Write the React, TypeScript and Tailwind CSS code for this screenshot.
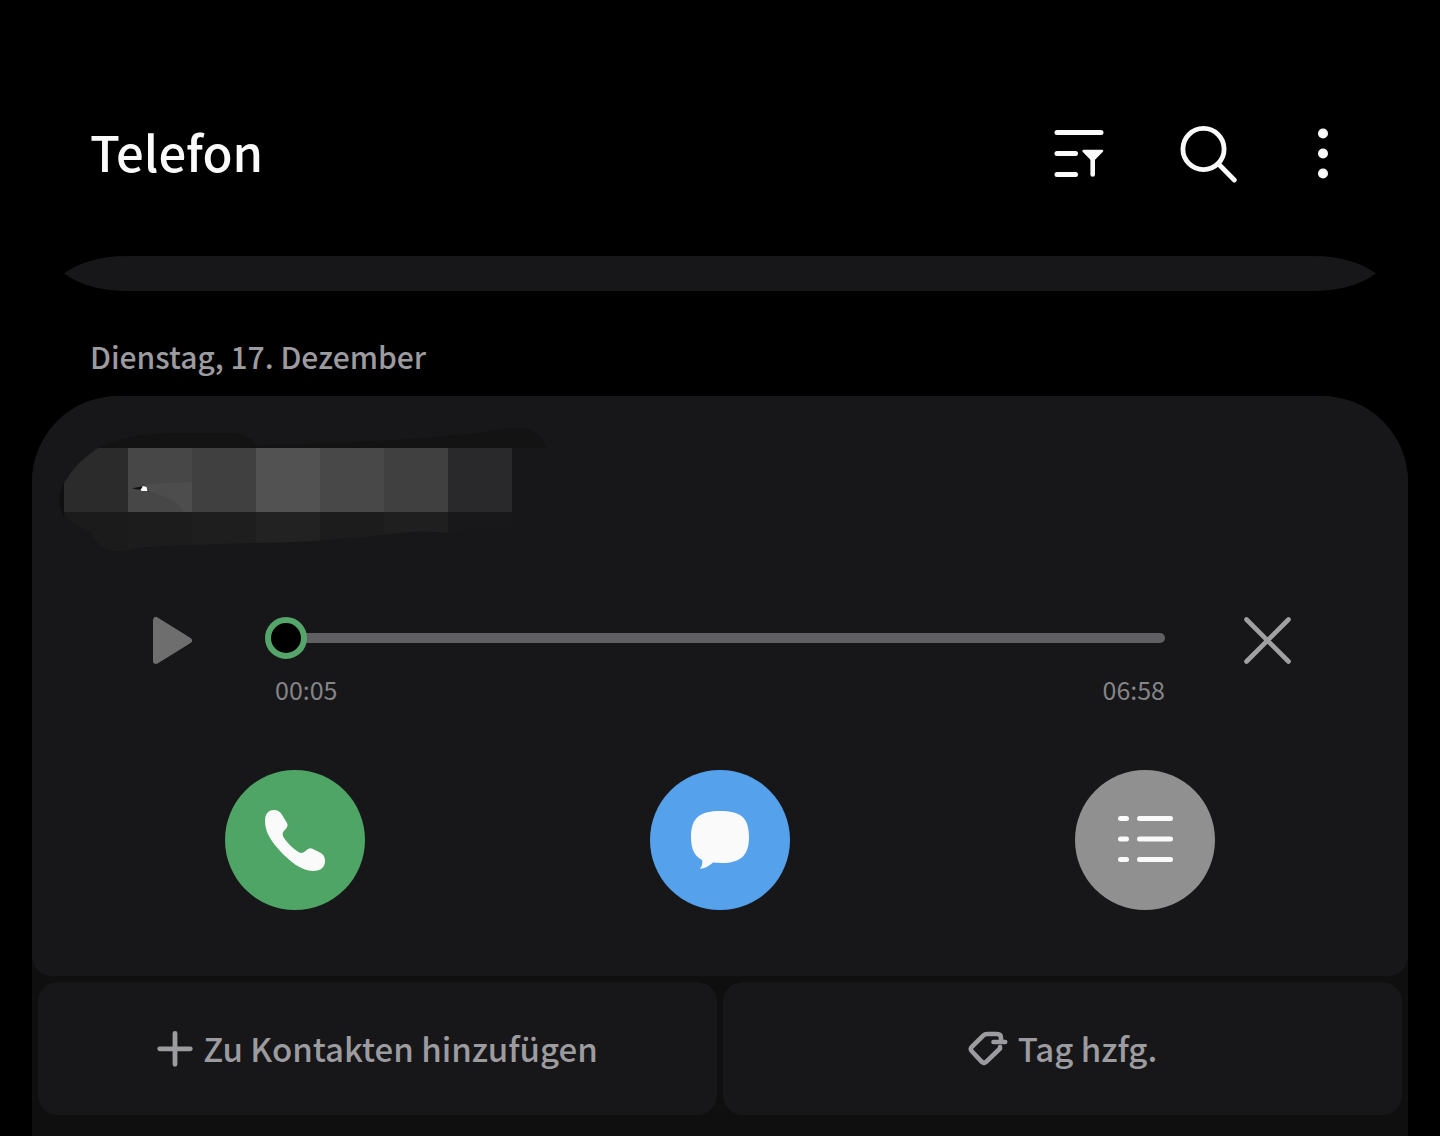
import { useState } from 'react';
import type { ReactNode } from 'react';

// --- Data ---
interface Block {
  x: number;
  top: string;
  bottom: string;
}

const nameBlocks: Block[] = [
  { x: 64, top: '#2b2b2c', bottom: '#1b1b1c' },
  { x: 128, top: '#474748', bottom: '#1c1c1d' },
  { x: 192, top: '#404041', bottom: '#1e1e1f' },
  { x: 256, top: '#525253', bottom: '#222223' },
  { x: 320, top: '#484849', bottom: '#1c1c1d' },
  { x: 384, top: '#404041', bottom: '#1f1f20' },
  { x: 448, top: '#29292b', bottom: '#18181a' },
];

const duration = 418;

// --- Icons ---
function FilterIcon() {
  return (
    <svg width="50" height="56" viewBox="1054.5 126 50 56" fill="none" stroke="#fafafa" strokeWidth="5" strokeLinecap="round">
      <path d="M1057.5 132.5H1101.5M1057.5 153.5H1076M1057.5 174.5H1076" />
      <path d="M1084 151H1102.5L1093.2 160.5Z" fill="#fafafa" strokeWidth="2.4" strokeLinejoin="round" />
      <path d="M1093.2 158V174.5" strokeWidth="4.6" />
    </svg>
  );
}

function SearchIcon() {
  return (
    <svg width="57" height="58" viewBox="1180.5 125 57 58" fill="none" stroke="#fafafa" strokeWidth="4.8" strokeLinecap="round">
      <circle cx="1204" cy="149" r="20.6" />
      <path d="M1219.5 164.5L1234.8 180" />
    </svg>
  );
}

function MoreIcon() {
  return (
    <svg width="18" height="56" viewBox="1313 126 18 56" fill="#fafafa">
      <circle cx="1323" cy="133.5" r="5" />
      <circle cx="1323" cy="153.5" r="5" />
      <circle cx="1323" cy="173.5" r="5" />
    </svg>
  );
}

function PhoneIcon() {
  return (
    <svg width="140" height="140" viewBox="225 770 140 140" fill="#fafafa">
      <path d="M265 821C265 814 268 810 274 810C278 810 280 812 281.5 814L287 823C288 825 287.5 826.5 286.5 828L283.5 831.5C282 833.5 282.7 835.5 284 838C288 844 294 849 298.5 852C300.5 853.5 303 853 304.5 851.8L308 849C309.5 848 311 847.9 312.5 848.7L320 852.5C323.5 854.5 325 857 325 861C325 867 321 871 313 871C301 871 290 861 281 852C272 842 265 833 265 821Z" />
    </svg>
  );
}

function MessageIcon() {
  return (
    <svg width="140" height="140" viewBox="650 770 140 140" fill="#fafafa">
      <path d="M720 811C740 811 749 817 749 837C749 856 740 863 722 863L713 862.5C709 866.5 704 869 699.8 868.8C702 866.5 703 863 702 860C694 856 691 848 691 837C691 817 701 811 720 811Z" />
    </svg>
  );
}

function ListIcon() {
  return (
    <svg width="140" height="140" viewBox="1075 770 140 140" fill="none" stroke="#fafafa" strokeWidth="5" strokeLinecap="round">
      <path d="M1120.5 818.5H1126.5M1139.5 818.5H1170.5M1120.5 839H1126.5M1139.5 839H1170.5M1120.5 859.5H1126.5M1139.5 859.5H1170.5" />
    </svg>
  );
}

function PlusIcon() {
  return (
    <svg width="36" height="40" viewBox="156.5 1029 36 40" fill="none" stroke="currentColor" strokeWidth="4.8" strokeLinecap="round">
      <path d="M159.2 1048.8H189.8M174.5 1033.3V1064.3" />
    </svg>
  );
}

function TagIcon() {
  return (
    <svg width="40" height="40" viewBox="968 1029 40 40" fill="none" stroke="currentColor" strokeWidth="4.6" strokeLinecap="round" strokeLinejoin="round">
      <path d="M1001 1042V1038Q1001 1034 997 1034H987Q984.8 1034 983.2 1035.6L971.8 1046.8Q969.8 1049 971.8 1051.2L981.8 1061.8Q984 1063.8 986.2 1061.8L1000 1048.5V1047" />
      <path d="M993.5 1042H1005.2" />
    </svg>
  );
}

/** Caller name, covered with coarse blocks and a marker stroke */
function HiddenName() {
  return (
    <svg width="490" height="128" viewBox="58 426 490 128" className="ml-[26px] block max-w-full" role="img" aria-label="Name">
      <defs>
        <clipPath id="name-top">
          <path d="M64 483Q76 462 98 448H512V512H64Z" />
        </clipPath>
        <clipPath id="name-bottom">
          <path d="M64 512H512V527Q480 529 448 533Q420 529 384 535Q320 542 256 543Q220 544 192 545Q150 546 134 549Q100 558 91 531Q70 526 64 512Z" />
        </clipPath>
      </defs>
      <path d="M98 448Q126 433 180 433H230Q250 434 256 445C340 444 420 439 470 434Q500 429 516 428Q542 428 546 448Z" fill="#131313" />
      <path d="M64 483Q55 500 64 518Z" fill="#101010" />
      <g clipPath="url(#name-bottom)">
        {nameBlocks.map((b) => (
          <rect key={b.x} x={b.x} y="512" width="64" height="42" fill={b.bottom} />
        ))}
      </g>
      <g clipPath="url(#name-top)">
        {nameBlocks.map((b) => (
          <rect key={b.x} x={b.x} y="448" width="64" height="64" fill={b.top} />
        ))}
      </g>
      <path d="M146 484L192 482V512H183Q178 500 163 496L146 490Z" fill="#4d4d4e" />
      <path d="M132 488.5L141 486.500L150 491.5L142 490Z" fill="#111111" />
      <path d="M140.5 490L143 486L146.500 487L147.500 491H142Z" fill="#ffffff" />
    </svg>
  );
}

/** Pointed end of the scrolled-away card */
function CardTip({ flip = false }: { flip?: boolean }) {
  return (
    <svg width="64" height="35" viewBox="0 0 64 35" fill="#171719" className={flip ? '-scale-x-100' : ''}>
      <path d="M0 17.5Q24 0 64 0V35Q24 35 0 17.5Z" />
    </svg>
  );
}

// --- Controls ---
function RoundButton({ label, className, children }: { label: string; className: string; children: ReactNode }) {
  return (
    <button type="button" aria-label={label} className={`size-[140px] rounded-full ${className}`}>
      {children}
    </button>
  );
}

function TileButton({ icon, children }: { icon: ReactNode; children: ReactNode }) {
  return (
    <button
      type="button"
      className="flex h-[133px] items-center justify-center gap-2.5 rounded-[20px] bg-[#171719] text-[33px] leading-[40px] font-medium text-[#9c9b9f]"
    >
      {icon}
      <span className="pb-0.5">{children}</span>
    </button>
  );
}

function Player() {
  const [position, setPosition] = useState(0);

  return (
    <div className="mt-[62px] flex items-start pr-[117px] pl-[121px]">
      <button type="button" aria-label="Wiedergabe">
        <svg width="40" height="48" viewBox="153 616 40 48" fill="#6e6e6f" stroke="#6e6e6f" strokeWidth="6" strokeLinejoin="round">
          <path d="M156 620V661L189 640.5Z" />
        </svg>
      </button>
      <div className="mr-[78px] ml-[72px] flex-1">
        <input
          type="range"
          aria-label="Position"
          min={0}
          max={duration}
          value={position}
          onChange={(e) => setPosition(Number(e.target.value))}
          className="block h-11 w-full appearance-none bg-transparent [&::-webkit-slider-runnable-track]:h-2.5 [&::-webkit-slider-runnable-track]:rounded-full [&::-webkit-slider-runnable-track]:bg-[linear-gradient(to_right,transparent_20px,#605f63_20px)] [&::-webkit-slider-thumb]:-mt-4 [&::-webkit-slider-thumb]:size-[42px] [&::-webkit-slider-thumb]:appearance-none [&::-webkit-slider-thumb]:rounded-full [&::-webkit-slider-thumb]:border-[6px] [&::-webkit-slider-thumb]:border-solid [&::-webkit-slider-thumb]:border-[#55a56b] [&::-webkit-slider-thumb]:bg-black"
        />
        <div className="mt-[13px] flex justify-between pl-2.5 text-[25px] leading-[32px] text-[#858487]">
          <span>00:05</span>
          <span>06:58</span>
        </div>
      </div>
      <button type="button" aria-label="Schließen">
        <svg width="48" height="48" viewBox="1243 616 48 48" fill="none" stroke="#a09fa2" strokeWidth="4.6" strokeLinecap="round">
          <path d="M1246.5 619.5L1288.5 661.5M1288.5 619.5L1246.5 661.5" />
        </svg>
      </button>
    </div>
  );
}

export default function App() {
  return (
    <main className="flex min-h-screen flex-col bg-black font-['Noto_Sans_CJK_JP','Noto_Sans',sans-serif]">
      <header className="flex items-center justify-between pt-[110px] pr-[109px] pl-[90px]">
        <h1 className="pb-1.5 text-[49px] leading-[82px] font-medium text-[#fafafa]">Telefon</h1>
        <div className="flex items-center gap-[76px]">
          <button type="button" aria-label="Filter">
            <FilterIcon />
          </button>
          <button type="button" aria-label="Suche">
            <SearchIcon />
          </button>
          <button type="button" aria-label="Weitere Optionen">
            <MoreIcon />
          </button>
        </div>
      </header>

      <div className="mt-[58px] flex px-16">
        <CardTip />
        <div className="flex-1 bg-[#171719]" />
        <CardTip flip />
      </div>

      <h2 className="mt-[45px] pl-[90px] text-[30px] leading-[40px] font-medium text-[#9c9b9f]">Dienstag, 17. Dezember</h2>

      <section className="mx-8 mt-5 flex-1 rounded-t-[86px] bg-[#0f0f0f]">
        <div className="rounded-t-[86px] rounded-b-[20px] bg-[#171719] pt-[30px] pb-[66px]">
          <HiddenName />
          <Player />
          <div className="mt-[65px] grid grid-cols-3 justify-items-center px-[50px]">
            <RoundButton label="Anrufen" className="bg-[#4fa566]">
              <PhoneIcon />
            </RoundButton>
            <RoundButton label="Nachricht" className="bg-[#55a1eb]">
              <MessageIcon />
            </RoundButton>
            <RoundButton label="Details" className="bg-[#909090]">
              <ListIcon />
            </RoundButton>
          </div>
        </div>

        <div className="grid grid-cols-2 gap-1.5 p-1.5">
          <TileButton icon={<PlusIcon />}>Zu Kontakten hinzufügen</TileButton>
          <TileButton icon={<TagIcon />}>Tag hzfg.</TileButton>
        </div>
      </section>
    </main>
  );
}
